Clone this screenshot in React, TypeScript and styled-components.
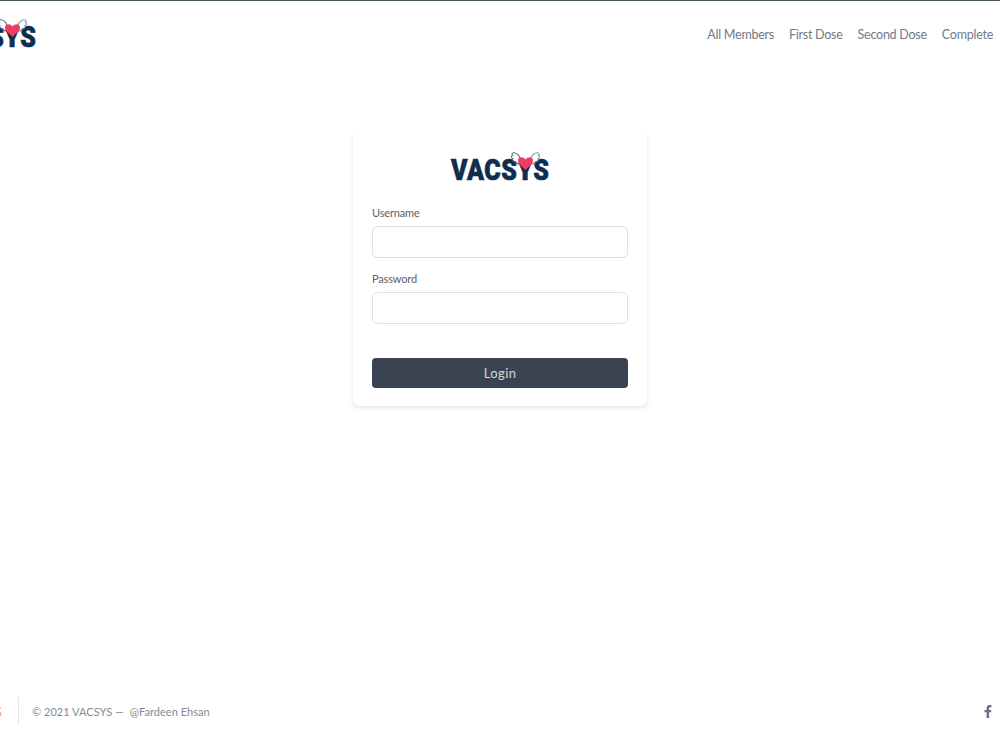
import React from "react";
import styled, { createGlobalStyle } from "styled-components";

const Global = createGlobalStyle`
  html, body { margin: 0; padding: 0; background: #fff; }
  body { font-family: "Lato", "Liberation Sans", sans-serif; overflow: hidden; }
`;

const Page = styled.div`
  width: 1000px;
  height: 750px;
  box-sizing: border-box;
  border-top: 1px solid #4a5c62;
  display: flex;
  flex-direction: column;
  overflow: hidden;
`;

const Header = styled.header`
  height: 66px;
  flex: none;
  display: flex;
  align-items: center;
  justify-content: space-between;
  padding-right: 7px;
`;

const HeaderLogo = styled.div`
  margin-left: -62px;
  margin-top: -1px;
`;

const Nav = styled.nav`
  display: flex;
  gap: 15px;
`;

const NavLink = styled.a`
  font-size: 12.5px;
  letter-spacing: -0.25px;
  color: #727985;
`;

const Main = styled.main`
  flex: 1;
  display: flex;
  justify-content: center;
  align-items: flex-start;
  padding-top: 66px;
`;

const Card = styled.form`
  width: 294px;
  height: 273px;
  box-sizing: border-box;
  background: #fff;
  border-radius: 0 0 6px 6px;
  box-shadow: 0 2px 4px rgba(0, 0, 0, 0.1), 0 0 2px rgba(0, 0, 0, 0.05);
  clip-path: inset(0 -8px -8px -8px);
  padding: 19px 19px 0;
  display: flex;
  flex-direction: column;
`;

const CardLogo = styled.div`
  display: flex;
  justify-content: center;
  margin-bottom: 21px;
`;

const Label = styled.label`
  display: block;
  font-size: 11px;
  line-height: 20px;
  letter-spacing: -0.15px;
  color: #59606c;
  margin-bottom: 3px;
`;

const Input = styled.input`
  display: block;
  width: 100%;
  height: 32px;
  box-sizing: border-box;
  border: 1px solid #dcdfe4;
  border-radius: 5px;
  background: #fff;
  margin-bottom: 11px;
  outline: none;
`;

const Button = styled.button`
  margin-top: 23px;
  height: 30px;
  width: 100%;
  border: none;
  border-radius: 4px;
  background: #3a4351;
  color: #d4d7dc;
  font-family: inherit;
  font-size: 13px;
  letter-spacing: 0.4px;
`;

const Footer = styled.footer`
  height: 52px;
  flex: none;
  display: flex;
  align-items: flex-start;
  justify-content: space-between;
  padding: 0 6px 0 0;
`;

const FooterLeft = styled.div`
  display: flex;
  align-items: center;
  height: 28px;
  margin-top: -1px;
`;

const Brand = styled.span`
  width: 2px;
  overflow: hidden;
  direction: rtl;
  font-size: 14px;
  color: #f6a56f;
  margin-right: 16px;
`;

const Copy = styled.span`
  height: 28px;
  border-left: 1px solid #e5e7eb;
  padding-left: 13px;
  display: flex;
  align-items: center;
  gap: 6px;
  font-size: 11px;
  letter-spacing: 0.03px;
  color: #858b95;
`;

const Facebook = styled.svg`
  width: 12px;
  height: 13px;
  margin-top: 7px;
  fill: #6b7280;
`;

const LogoWrap = styled.div`
  position: relative;
  width: 98px;
  height: 30px;
`;

const LogoText = styled.span`
  position: absolute;
  left: 0;
  top: 5px;
  font-family: "Roboto", "Liberation Sans", sans-serif;
  font-weight: 900;
  font-size: 29px;
  line-height: 26px;
  letter-spacing: 0.6px;
  color: #0f2d4c;
  -webkit-text-stroke: 0.7px #0f2d4c;
  white-space: nowrap;
  transform: scaleX(0.86);
  transform-origin: left center;
`;

const LogoArt = styled.svg`
  position: absolute;
  left: 57px;
  top: 0;
  width: 36px;
  height: 18px;
`;

function Logo() {
  return (
    <LogoWrap>
      <LogoText>VACSYS</LogoText>
      <LogoArt viewBox="0 0 36 18">
        <path d="M12 6 C11 3 8 .5 5.5 .8 C4 1 3.5 2.5 4.5 3.5 C3 4 3 6 5 6.5 C4 8 5.5 9.5 7.5 9.5 C8 11 10 12 12 12Z" fill="#fff" stroke="#5f6f85" strokeWidth="1.1" />
        <path d="M23 6 C24 3 27 .5 29.5 .8 C31 1 31.5 2.5 30.5 3.5 C32 4 32 6 30 6.5 C31 8 29.5 9.5 27.5 9.5 C27 11 25 12 23 12Z" fill="#fff" stroke="#8793a5" strokeWidth="1.1" />
        <path d="M17.5 18 C13.5 14 10 12 10 8.5 C10 5 15 4 17.5 7.5 C20 4 25 5 25 8.5 C25 12 21.5 14 17.5 18Z" fill="#ee3d62" />
      </LogoArt>
    </LogoWrap>
  );
}

export default function App() {
  return (
    <>
      <Global />
      <Page>
        <Header>
          <HeaderLogo>
            <Logo />
          </HeaderLogo>
          <Nav>
            <NavLink>All Members</NavLink>
            <NavLink>First Dose</NavLink>
            <NavLink>Second Dose</NavLink>
            <NavLink>Complete</NavLink>
          </Nav>
        </Header>
        <Main>
          <Card>
            <CardLogo>
              <Logo />
            </CardLogo>
            <Label>Username</Label>
            <Input type="text" />
            <Label>Password</Label>
            <Input type="password" />
            <Button type="button">Login</Button>
          </Card>
        </Main>
        <Footer>
          <FooterLeft>
            <Brand>VACSYS</Brand>
            <Copy>
              <span>© 2021 VACSYS —</span>
              <span>@Fardeen Ehsan</span>
            </Copy>
          </FooterLeft>
          <Facebook viewBox="0 0 320 512">
            <path d="M279.14 288l14.22-92.66h-88.91v-60.13c0-25.35 12.42-50.06 52.24-50.06h40.42V6.26S260.43 0 225.36 0c-73.22 0-121.08 44.38-121.08 124.72v70.62H22.89V288h81.39v224h100.17V288z" />
          </Facebook>
        </Footer>
      </Page>
    </>
  );
}
